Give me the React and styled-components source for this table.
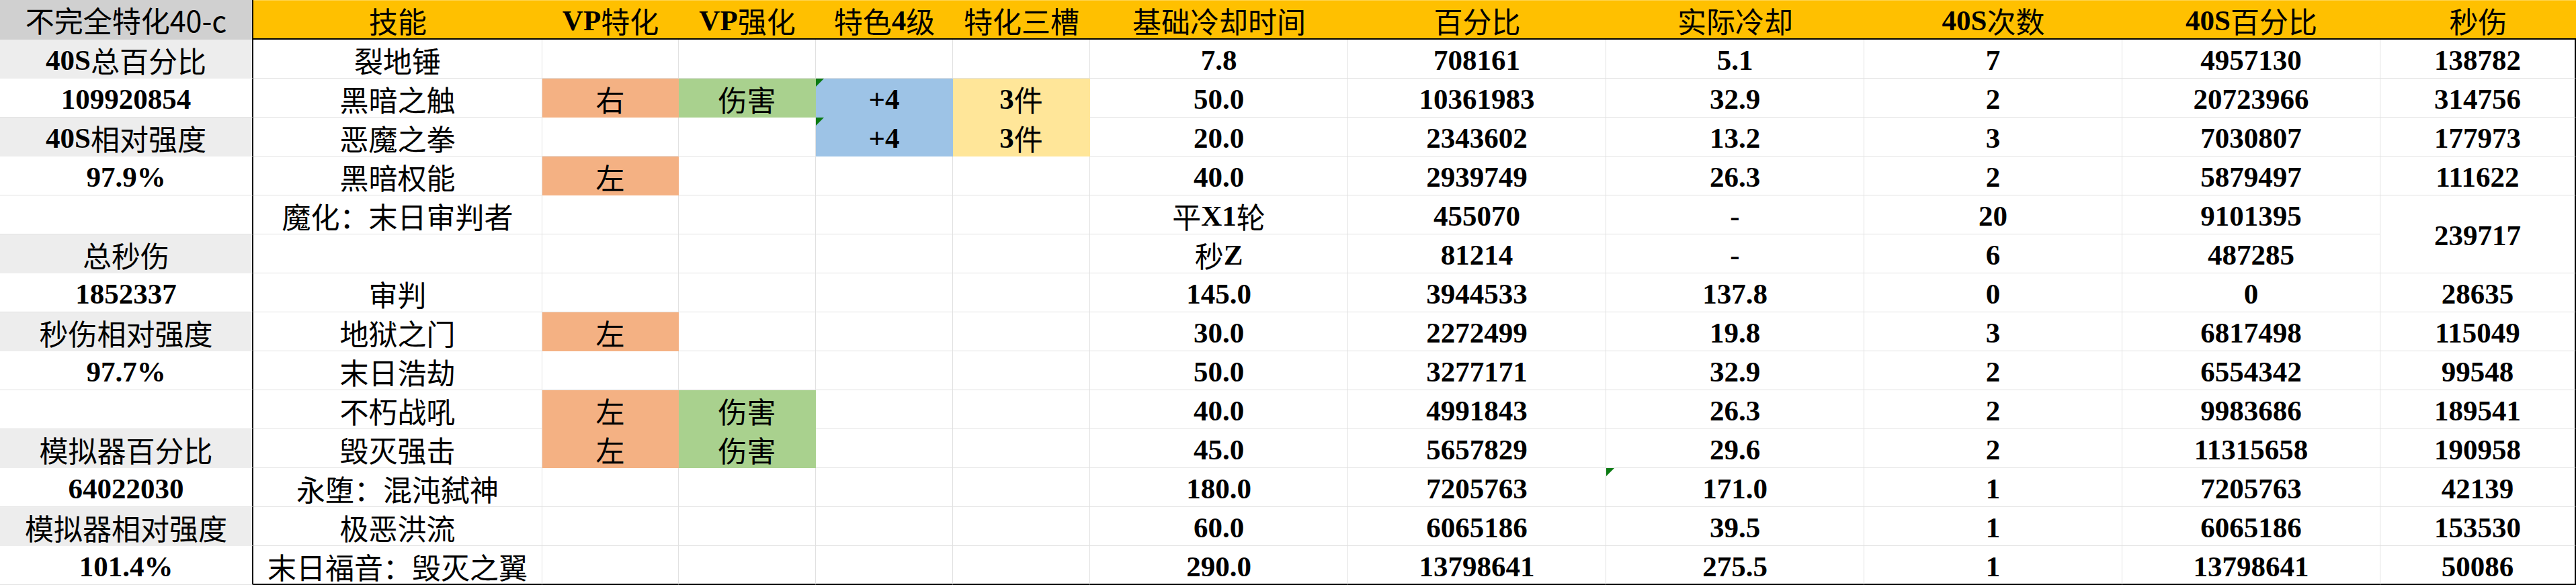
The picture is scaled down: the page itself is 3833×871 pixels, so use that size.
import React from "react";
import styled, { createGlobalStyle } from "styled-components";

const GlobalStyle = createGlobalStyle`
  html, body {
    margin: 0;
    padding: 0;
    background: #fff;
  }
  body {
    font-family: "Liberation Serif", "Noto Sans CJK SC", serif;
  }
`;

const fills = {
  orange: "#f4b183",
  green: "#a9d18e",
  blue: "#9dc3e6",
  yellow: "#ffe699",
  gray: "#ededed",
};

const Sheet = styled.div`
  display: grid;
  grid-template-columns: 377px 430px 203px 204px 204px 204px repeat(5, 384px) 291px;
  grid-template-rows: 59px repeat(14, 58px);
  width: 3833px;
  font-size: 43px;
  font-weight: 700;
  color: #000;
  line-height: 1;
`;

const Cell = styled.div`
  position: relative;
  box-sizing: border-box;
  display: flex;
  align-items: center;
  justify-content: center;
  padding-top: 4px;
  white-space: nowrap;
  background: ${(p) => p.$fill || "#fff"};
  border-right: ${(p) => (p.$edge ? "2px solid #000" : `1px solid ${p.$fill || "#e1e1e1"}`)};
  border-bottom: ${(p) => (p.$last ? "2px solid #000" : `1px solid ${p.$fill || "#e1e1e1"}`)};
  ${(p) => p.$span && `grid-row: span ${p.$span};`}
`;

const HeadCell = styled(Cell)`
  background: #ffc000;
  border-top: 1px solid #ffd54f;
  border-right: none;
  border-bottom: 2px solid #000;
  padding-top: 2px;
`;

const SideHead = styled(Cell)`
  background: #d0d0d0;
  border-right: 2px solid #000;
  border-bottom: none;
  font-family: "Noto Sans CJK SC", sans-serif;
  font-weight: 400;
  padding-top: 0;
`;

const SideCell = styled(Cell)`
  border-right: 2px solid #000;
`;

const Han = styled.span`
  font-family: "Noto Sans CJK SC", sans-serif;
  font-weight: 400;
`;

const Mark = styled.span`
  position: absolute;
  top: 0;
  left: 0;
  width: 12px;
  height: 12px;
  background: #0b7a12;
  clip-path: polygon(0 0, 100% 0, 0 100%);
`;

const hanRe = /([\u3000-\u303f\u4e00-\u9fff\uff00-\uffef]+)/;

const Text = ({ children }) =>
  String(children)
    .split(hanRe)
    .map((part, i) => (hanRe.test(part) ? <Han key={i}>{part}</Han> : part));

const headers = [
  "技能",
  "VP特化",
  "VP强化",
  "特色4级",
  "特化三槽",
  "基础冷却时间",
  "百分比",
  "实际冷却",
  "40S次数",
  "40S百分比",
  "秒伤",
];

const side = [
  { text: "40S总百分比", gray: true },
  { text: "109920854" },
  { text: "40S相对强度", gray: true },
  { text: "97.9%" },
  { text: "" },
  { text: "总秒伤", gray: true },
  { text: "1852337" },
  { text: "秒伤相对强度", gray: true },
  { text: "97.7%" },
  { text: "" },
  { text: "模拟器百分比", gray: true },
  { text: "64022030" },
  { text: "模拟器相对强度", gray: true },
  { text: "101.4%" },
];

const rows = [
  { skill: "裂地锤", base: "7.8", pct: "708161", cd: "5.1", n: "7", pct40: "4957130", dps: "138782" },
  { skill: "黑暗之触", vp: "右", boost: "伤害", tese: "+4", teseMark: true, slot: "3件", base: "50.0", pct: "10361983", cd: "32.9", n: "2", pct40: "20723966", dps: "314756" },
  { skill: "恶魔之拳", tese: "+4", teseMark: true, slot: "3件", base: "20.0", pct: "2343602", cd: "13.2", n: "3", pct40: "7030807", dps: "177973" },
  { skill: "黑暗权能", vp: "左", base: "40.0", pct: "2939749", cd: "26.3", n: "2", pct40: "5879497", dps: "111622" },
  { skill: "魔化：末日审判者", base: "平X1轮", pct: "455070", cd: "-", n: "20", pct40: "9101395", dps: "239717", dpsSpan: 2 },
  { skill: "", base: "秒Z", pct: "81214", cd: "-", n: "6", pct40: "487285", dps: null },
  { skill: "审判", base: "145.0", pct: "3944533", cd: "137.8", n: "0", pct40: "0", dps: "28635" },
  { skill: "地狱之门", vp: "左", base: "30.0", pct: "2272499", cd: "19.8", n: "3", pct40: "6817498", dps: "115049" },
  { skill: "末日浩劫", base: "50.0", pct: "3277171", cd: "32.9", n: "2", pct40: "6554342", dps: "99548" },
  { skill: "不朽战吼", vp: "左", boost: "伤害", base: "40.0", pct: "4991843", cd: "26.3", n: "2", pct40: "9983686", dps: "189541" },
  { skill: "毁灭强击", vp: "左", boost: "伤害", base: "45.0", pct: "5657829", cd: "29.6", n: "2", pct40: "11315658", dps: "190958" },
  { skill: "永堕：混沌弑神", base: "180.0", pct: "7205763", cd: "171.0", cdMark: true, n: "1", pct40: "7205763", dps: "42139" },
  { skill: "极恶洪流", base: "60.0", pct: "6065186", cd: "39.5", n: "1", pct40: "6065186", dps: "153530" },
  { skill: "末日福音：毁灭之翼", base: "290.0", pct: "13798641", cd: "275.5", n: "1", pct40: "13798641", dps: "50086" },
];

const Row = ({ row, index }) => {
  const last = index === rows.length - 1;
  const s = side[index];
  return (
    <>
      <SideCell $fill={s.gray ? fills.gray : null}>
        <Text>{s.text}</Text>
      </SideCell>
      <Cell $last={last}>
        <Text>{row.skill}</Text>
      </Cell>
      <Cell $last={last} $fill={row.vp ? fills.orange : null}>
        {row.vp && <Text>{row.vp}</Text>}
      </Cell>
      <Cell $last={last} $fill={row.boost ? fills.green : null}>
        {row.boost && <Text>{row.boost}</Text>}
      </Cell>
      <Cell $last={last} $fill={row.tese ? fills.blue : null}>
        {row.teseMark && <Mark />}
        {row.tese}
      </Cell>
      <Cell $last={last} $fill={row.slot ? fills.yellow : null}>
        {row.slot && <Text>{row.slot}</Text>}
      </Cell>
      <Cell $last={last}>
        <Text>{row.base}</Text>
      </Cell>
      <Cell $last={last}>{row.pct}</Cell>
      <Cell $last={last}>
        {row.cdMark && <Mark />}
        {row.cd}
      </Cell>
      <Cell $last={last}>{row.n}</Cell>
      <Cell $last={last}>{row.pct40}</Cell>
      {row.dps !== null && (
        <Cell $last={last} $edge $span={row.dpsSpan}>
          {row.dps}
        </Cell>
      )}
    </>
  );
};

export default function App() {
  return (
    <>
      <GlobalStyle />
      <Sheet>
        <SideHead>不完全特化40-c</SideHead>
        {headers.map((h) => (
          <HeadCell key={h}>
            <Text>{h}</Text>
          </HeadCell>
        ))}
        {rows.map((row, i) => (
          <Row key={i} row={row} index={i} />
        ))}
      </Sheet>
    </>
  );
}
